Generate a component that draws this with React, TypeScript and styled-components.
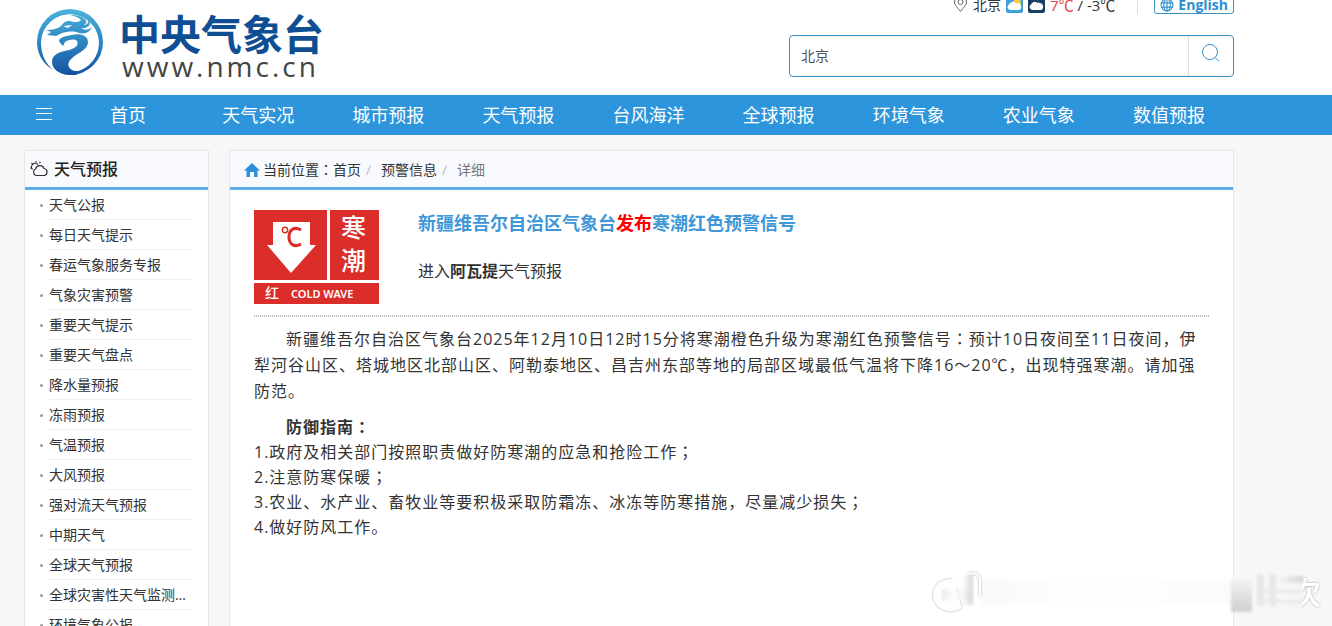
import React from "react";
import styled, { createGlobalStyle } from "styled-components";

const Global = createGlobalStyle`
  * { box-sizing: border-box; }
  body { margin: 0; background: #f7f7f7; color: #333; font: 14px/20px "Open Sans", "Noto Sans CJK SC", sans-serif; }
  a { color: inherit; text-decoration: none; }
  ul, ol, p, h1, h2 { margin: 0; padding: 0; list-style: none; }
`;

const Page = styled.div`
  position: relative;
  height: 100vh;
  overflow: hidden;
`;

const Header = styled.header`
  display: flex;
  justify-content: space-between;
  height: 95px;
  padding: 0 98px 0 36px;
  background: #fff;
`;

const Logo = styled.a`
  display: flex;
  align-items: flex-start;
  gap: 16px;
  padding-top: 8px;
`;

const LogoMark = styled.svg`
  width: 67px;
  height: 68px;
`;

const LogoText = styled.span`
  display: flex;
  flex-direction: column;
  padding-top: 6px;
`;

const LogoName = styled.strong`
  color: #104e93;
  font-size: 41px;
  line-height: 40px;
  font-weight: 700;
`;

const LogoSite = styled.span`
  padding-left: 3px;
  color: #444;
  font-size: 28px;
  line-height: 24px;
  letter-spacing: 3px;
`;

const Tools = styled.div`
  display: flex;
  flex-direction: column;
  gap: 21px;
  width: 445px;
`;

const TopBar = styled.div`
  display: flex;
  justify-content: flex-end;
  align-items: flex-end;
  height: 14px;
  overflow: hidden;
`;

const Weather = styled.a`
  display: flex;
  align-items: center;
  gap: 5px;
  height: 19px;
  padding-right: 22px;
  margin-right: 16px;
  border-right: 1px solid #ddd;
`;

const Temperature = styled.span`
  font-size: 15px;
`;

const Hot = styled.span`
  color: #e8404a;
`;

const English = styled.a`
  display: flex;
  align-items: center;
  gap: 4px;
  height: 19px;
  padding: 0 5px;
  border: 1px solid #3a8fc4;
  border-radius: 3px;
  color: #2d8fd0;
  font-weight: 700;
`;

const Search = styled.form`
  display: flex;
  height: 42px;
  border: 1px solid #3a8fc4;
  border-radius: 4px;
  background: #fff;
`;

const SearchInput = styled.input`
  flex: 1;
  min-width: 0;
  padding: 0 11px;
  border: 0;
  background: none;
  color: #555;
  font: inherit;
`;

const SearchButton = styled.button`
  width: 45px;
  padding: 0 0 4px;
  border: 0;
  border-left: 1px solid #ddd;
  background: none;
`;

const Nav = styled.nav`
  display: flex;
  height: 40px;
  padding: 0 98px 0 24px;
  background: #2d95db;
  color: #fff;
`;

const MenuButton = styled.button`
  width: 39px;
  padding: 0;
  border: 0;
  background: none;
  color: #fff;
`;

const NavLink = styled.a`
  flex: 1;
  font-size: 18px;
  line-height: 40px;
  text-align: center;
`;

const Columns = styled.div`
  display: flex;
  gap: 20px;
  padding: 15px 98px 0 24px;
`;

const Panel = styled.section`
  border: 1px solid #e7e7e7;
  background: #fff;
`;

const Sidebar = styled(Panel)`
  flex: 0 0 185px;
  min-width: 0;
`;

const Main = styled(Panel)`
  flex: 1;
  min-width: 0;
  min-height: 600px;
`;

const PanelHead = styled.div`
  display: flex;
  align-items: center;
  height: 39px;
  border-bottom: 3px solid #62ade8;
  background: #f8fafd;
`;

const SideTitle = styled.h2`
  display: flex;
  align-items: center;
  gap: 5px;
  padding-left: 5px;
  color: #222;
  font-size: 16px;
  font-weight: 500;
`;

const SideItem = styled.li`
  display: flex;
  gap: 6px;
  padding: 0 16px 0 15px;
  line-height: 29px;
  &::before {
    content: "";
    flex: none;
    width: 3px;
    height: 3px;
    margin-top: 14px;
    border-radius: 50%;
    background: #999;
  }
`;

const SideLink = styled.a`
  flex: 1;
  min-width: 0;
  border-bottom: 1px solid #eee;
  overflow: hidden;
  white-space: nowrap;
  text-overflow: ellipsis;
`;

const Crumbs = styled.nav`
  display: flex;
  align-items: center;
  padding: 2px 0 0 14px;
`;

const Place = styled.span`
  padding-left: 3px;
`;

const Slash = styled.span`
  width: 20px;
  padding-left: 5px;
  color: #bbb;
`;

const Muted = styled.span`
  color: #777;
`;

const Article = styled.article`
  padding: 20px 24px;
`;

const Summary = styled.div`
  display: flex;
  gap: 39px;
  padding-bottom: 11px;
`;

const DottedRule = styled.div`
  height: 2px;
  background: repeating-linear-gradient(90deg, #bbb 0 1px, #fff 1px 2px);
`;

const Title = styled.h1`
  color: #3f97d8;
  font-size: 18px;
  line-height: 26px;
`;

const Red = styled.span`
  color: #f00;
`;

const Enter = styled.p`
  padding-top: 23px;
  font-size: 16px;
  line-height: 24px;
`;

const Body = styled.div`
  padding-top: 9px;
  font-size: 16px;
  line-height: 26px;
  letter-spacing: 1px;
`;

const Lead = styled.p`
  text-indent: 32px;
`;

const GuideTitle = styled.p`
  padding-top: 10px;
  text-indent: 32px;
  font-weight: 700;
`;

const Guide = styled.p`
  line-height: 25px;
`;

const CenteredMark = styled.span`
  font-family: "Noto Sans CJK TC", sans-serif;
  line-height: 1;
`;

const Watermark = styled.svg`
  position: absolute;
  right: 0;
  bottom: 4px;
  width: 412px;
  height: 60px;
`;

const navItems = ["首页", "天气实况", "城市预报", "天气预报", "台风海洋", "全球预报", "环境气象", "农业气象", "数值预报"];

const sideItems = [
  "天气公报", "每日天气提示", "春运气象服务专报", "气象灾害预警", "重要天气提示",
  "重要天气盘点", "降水量预报", "冻雨预报", "气温预报", "大风预报",
  "强对流天气预报", "中期天气", "全球天气预报", "全球灾害性天气监测月报", "环境气象公报",
];

const guides = [
  "1.政府及相关部门按照职责做好防寒潮的应急和抢险工作；",
  "2.注意防寒保暖；",
  "3.农业、水产业、畜牧业等要积极采取防霜冻、冰冻等防寒措施，尽量减少损失；",
  "4.做好防风工作。",
];

// Sets full-width colons and semicolons in the middle of their cell.
const Text = ({ children }: { children: string }) => (
  <>
    {children.split(/([：；])/).map((part, i) =>
      i % 2 ? <CenteredMark key={i}>{part}</CenteredMark> : part
    )}
  </>
);

const Dragon = () => (
  <LogoMark viewBox="0 0 67 68" aria-hidden="true">
    <defs>
      <linearGradient id="sea" gradientUnits="userSpaceOnUse" x1="0" y1="0" x2="0" y2="68">
        <stop offset="0" stopColor="#4db4dd" />
        <stop offset="0.55" stopColor="#2a80c0" />
        <stop offset="1" stopColor="#1450a0" />
      </linearGradient>
    </defs>
    <g fill="url(#sea)">
      <path d="M17 62C6 55 1 45 1 34A33 33 0 1 1 34 67L31 64A29 29 0 1 0 5 34C5 46 9 55 17 62Z" />
      <path d="M23 32C26 28 31 28 36 27C43 25 52 27 52 34C52 40 46 43 40 47C34 51 31 55 33 59C35 63 40 64 45 63L40 67H32C23 66 16 61 16 54C16 46 24 44 33 42C40 40 43 37 41 33C38 30 32 32 29 34L27 38C25 36 23 34 23 32Z" />
      <path d="M10 22C15 22 22 21 25 18C27 15 29 13 33 13C38 14 42 15 45 12C42 9 38 8 34 7C41 7 46 8 50 12C51 14 50 16 48 17C51 17 52 15 53 12C56 17 51 21 45 20C49 23 53 22 56 19C54 25 47 27 40 24C35 23 30 24 26 25L20 28L11 27L15 24Z" />
    </g>
    <path d="M27 18L36 17L32 20Z" fill="#fff" />
  </LogoMark>
);

const WarningSign = () => (
  <svg width="125" height="94" viewBox="0 0 125 94" role="img" aria-label="寒潮红色预警">
    <path d="M0 0H73V70H0ZM76 0H125V70H76ZM0 73H125V94H0Z" fill="#db2d2a" />
    <path d="M19 12H56V35H62L37 63 13 35H19Z" fill="#fff" />
    <circle cx="31" cy="20" r="2.700" fill="none" stroke="#db2d2a" strokeWidth="1.400" />
    <path d="M47 20C40 16 35 20 35 27S40 38 47 34" fill="none" stroke="#db2d2a" strokeWidth="3" />
    <g fill="#fff" fontWeight="500">
      <text x="87" y="27" fontSize="25">寒</text>
      <text x="87" y="60" fontSize="25">潮</text>
      <text x="11" y="88" fontSize="14">红</text>
      <text x="37" y="88" fontSize="11" fontWeight="600" fontFamily="Noto Sans">COLD WAVE</text>
    </g>
  </svg>
);

export default function App() {
  return (
    <Page>
      <Global />
      <Header>
        <Logo href="#">
          <Dragon />
          <LogoText>
            <LogoName>中央气象台</LogoName>
            <LogoSite>www.nmc.cn</LogoSite>
          </LogoText>
        </Logo>
        <Tools>
          <TopBar>
            <Weather href="#">
              <svg width="15" height="17" viewBox="0 0 15 17" fill="none" stroke="#666">
                <path d="M7.500 15.500C4 11 1.500 9 1.500 6a6 6 0 0 1 12 0c0 3-2.500 5-6 9.500Z" />
                <circle cx="7.500" cy="6" r="2.500" />
              </svg>
              <span>北京</span>
              <svg width="17" height="17" viewBox="0 0 17 17">
                <rect width="17" height="17" rx="2" fill="#3d9fd8" />
                <circle cx="11" cy="7" r="4" fill="#f9c74b" />
                <path d="M4 14a3 3 0 0 1-1-5.500 4 4 0 0 1 7-1 3 3 0 0 1 3 6.500Z" fill="#fff" />
              </svg>
              <svg width="17" height="17" viewBox="0 0 17 17">
                <rect width="17" height="17" rx="2" fill="#173f66" />
                <path d="M10 3a4 4 0 0 0 5 5 4 4 0 0 1-5 2Z" fill="#fff" />
                <path d="M4 14a3 3 0 0 1-1-5.500 4 4 0 0 1 7-1 3 3 0 0 1 3 6.500Z" fill="#fff" />
              </svg>
              <Temperature><Hot>7℃</Hot> / -3℃</Temperature>
            </Weather>
            <English href="#">
              <svg width="14" height="14" viewBox="0 0 13 13" fill="none" stroke="currentColor">
                <circle cx="6.500" cy="6.500" r="5.500" />
                <path d="M1 4.500H12M1 8.500H12M6.500 1V12" />
                <ellipse cx="6.500" cy="6.500" rx="3" ry="5.500" />
              </svg>
              English
            </English>
          </TopBar>
          <Search>
            <SearchInput aria-label="城市" defaultValue="北京" />
            <SearchButton type="button" aria-label="搜索">
              <svg width="20" height="20" viewBox="0 0 20 20" fill="none" stroke="#3a8fd0">
                <circle cx="9" cy="9" r="7.500" />
                <path d="M14.500 15L18 18" />
              </svg>
            </SearchButton>
          </Search>
        </Tools>
      </Header>
      <Nav>
        <MenuButton type="button" aria-label="菜单">
          <svg width="16" height="12" viewBox="0 0 16 12" stroke="currentColor">
            <path d="M0 .5H16M0 5.500H16M0 11.500H16" />
          </svg>
        </MenuButton>
        {navItems.map((n) => <NavLink href="#" key={n}>{n}</NavLink>)}
      </Nav>
      <Columns>
        <Sidebar>
          <PanelHead>
            <SideTitle>
              <svg width="19" height="16" viewBox="0 0 19 16" fill="none" stroke="#333" strokeWidth="1.200">
                <path d="M6 14.500a3.500 3.500 0 0 1-.5-6.500 4.500 4.500 0 0 1 8.500-.5 3.600 3.600 0 0 1 .5 7Z" />
                <path d="M2.500 8.500A3.500 3.500 0 0 1 8 3.500M0 7H1.500M1.500 2L2.800 3.200M6 0V1.500M10.500 1L9.300 2.200" />
              </svg>
              天气预报
            </SideTitle>
          </PanelHead>
          <ul>
            {sideItems.map((s) => <SideItem key={s}><SideLink href="#">{s}</SideLink></SideItem>)}
          </ul>
        </Sidebar>
        <Main>
          <PanelHead>
            <Crumbs>
              <svg width="16" height="14" viewBox="0 0 16 14" fill="#2d8fd5">
                <path d="M8 0L16 7.500H13.500V14H10V9H6V14H2.500V7.500H0Z" />
              </svg>
              <Place><Text>当前位置：</Text></Place>
              <a href="#">首页</a>
              <Slash>/</Slash>
              <a href="#">预警信息</a>
              <Slash>/</Slash>
              <Muted>详细</Muted>
            </Crumbs>
          </PanelHead>
          <Article>
            <Summary>
              <WarningSign />
              <div>
                <Title>新疆维吾尔自治区气象台<Red>发布</Red>寒潮红色预警信号</Title>
                <Enter>进入<a href="#"><b>阿瓦提</b></a>天气预报</Enter>
              </div>
            </Summary>
            <DottedRule />
            <Body>
              <Lead><Text>新疆维吾尔自治区气象台2025年12月10日12时15分将寒潮橙色升级为寒潮红色预警信号：预计10日夜间至11日夜间，伊犁河谷山区、塔城地区北部山区、阿勒泰地区、昌吉州东部等地的局部区域最低气温将下降16～20℃，出现特强寒潮。请加强防范。</Text></Lead>
              <GuideTitle><Text>防御指南：</Text></GuideTitle>
              {guides.map((g) => <Guide key={g}><Text>{g}</Text></Guide>)}
            </Body>
          </Article>
        </Main>
      </Columns>
      <Watermark viewBox="0 0 412 60" aria-hidden="true">
        <defs>
          <filter id="glow" x="-20%" y="-20%" width="140%" height="140%">
            <feDropShadow dx="0" dy="0" stdDeviation="1" floodColor="#777" floodOpacity="0.7" />
          </filter>
          <filter id="soft" x="-20%" y="-20%" width="140%" height="140%">
            <feGaussianBlur stdDeviation="1.500" />
          </filter>
          <linearGradient id="fade">
            <stop offset="0" stopColor="#ddd" stopOpacity="0" />
            <stop offset="1" stopColor="#d4d4d4" />
          </linearGradient>
          <linearGradient id="block" x2="0" y2="1">
            <stop offset="0" stopColor="#f0f0f0" />
            <stop offset="1" stopColor="#cfcfcf" />
          </linearGradient>
          <linearGradient id="trail">
            <stop offset="0" stopColor="#e8e8e8" />
            <stop offset="0.4" stopColor="#f8f8f8" stopOpacity="0.4" />
            <stop offset="1" stopColor="#f0f0f0" />
          </linearGradient>
        </defs>
        <path d="M34 19C12 17 8 43 28 47Q36 48 41 43" fill="#fff" stroke="#fff" strokeWidth="4" filter="url(#glow)" />
        <path d="M48 12Q60 9 60 19V34" fill="none" stroke="#fff" strokeWidth="2" filter="url(#glow)" />
        <g filter="url(#soft)">
          <rect x="32" y="10" width="16" height="16" fill="#fff" />
          <rect x="22" y="27" width="30" height="11" fill="url(#trail)" />
          <rect x="42" y="13" width="11" height="30" fill="url(#fade)" />
          <rect x="62" y="18" width="254" height="24" fill="url(#trail)" opacity="0.3" />
        </g>
        <g filter="url(#glow)">
          <text x="370" y="42" fontSize="31" fontWeight="500" fill="#fff">次</text>
        </g>
        <rect x="368" y="12" width="14" height="34" fill="#f5f5f5" />
        <g filter="url(#soft)">
          <rect x="311" y="18" width="21" height="32" fill="url(#block)" />
          <rect x="337" y="12" width="7" height="32" fill="#e6e6e6" />
          <rect x="349" y="12" width="7" height="32" fill="#e6e6e6" />
          <rect x="356" y="14" width="27" height="7" fill="url(#fade)" />
          <rect x="337" y="28" width="45" height="3" fill="#e8e8e8" />
          <rect x="337" y="38" width="45" height="3" fill="#e8e8e8" />
        </g>
      </Watermark>
    </Page>
  );
}
